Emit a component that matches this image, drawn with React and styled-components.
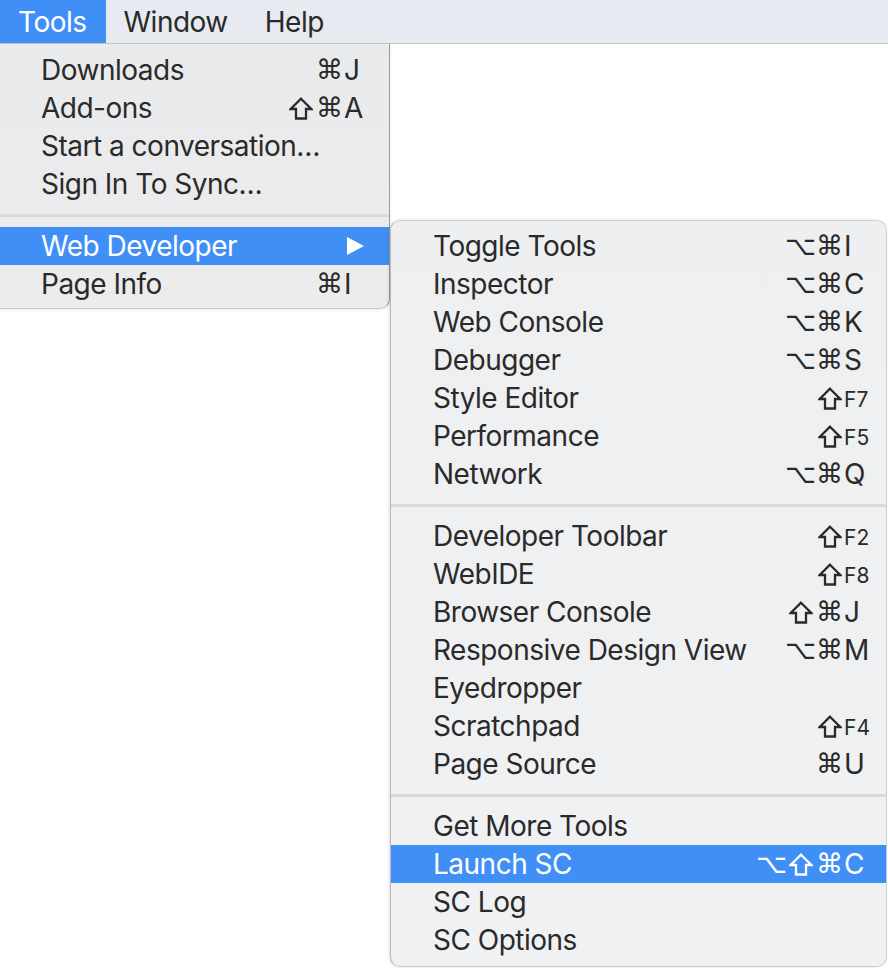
import React from "react";
import styled, { createGlobalStyle } from "styled-components";

const GlobalStyle = createGlobalStyle`
  html, body {
    margin: 0;
    padding: 0;
    background: #ffffff;
  }
  body {
    font-family: Inter, "Noto Sans", "Liberation Sans", sans-serif;
    -webkit-font-smoothing: antialiased;
  }
`;

const HIGHLIGHT = "#3f8ff7";
const TEXT = "#2a2a2a";

const Page = styled.div`
  width: 888px;
  height: 968px;
  overflow: hidden;
  display: flex;
  flex-direction: column;
  background: #ffffff;
`;

const MenuBar = styled.div`
  height: 44px;
  box-sizing: border-box;
  display: flex;
  align-items: stretch;
  background: #e7ebf1;
  border-bottom: 1px solid #c2c4c8;
  flex-shrink: 0;
`;

const BarItem = styled.div`
  display: flex;
  align-items: center;
  padding: 0 19px 0 18px;
  font-size: 28px;
  color: ${(p) => (p.$active ? "#ffffff" : TEXT)};
  background: ${(p) => (p.$active ? HIGHLIGHT : "transparent")};
  letter-spacing: -0.5px;
`;

const MenuArea = styled.div`
  display: flex;
  align-items: flex-start;
`;

const Menu = styled.div`
  width: ${(p) => p.$width}px;
  box-sizing: border-box;
  margin-top: ${(p) => p.$offset || 0}px;
  padding: ${(p) => p.$padTop}px 0 ${(p) => p.$padBottom}px;
  background: ${(p) => p.$bg};
  border-right: 1px solid ${(p) => p.$borderColor};
  border-left: ${(p) => (p.$sub ? "1px solid #b9babd" : "none")};
  border-top: ${(p) => (p.$sub ? "1px solid #cfd0d3" : "none")};
  border-bottom: 1px solid #c9cacd;
  border-radius: ${(p) => (p.$sub ? "10px" : "0 0 10px 0")};
  box-shadow: ${(p) =>
    p.$sub ? "-1px 0 3px rgba(0,0,0,0.12)" : "0 1px 3px rgba(0,0,0,0.1)"};
  overflow: hidden;
  flex-shrink: 0;
`;

const Row = styled.div`
  height: 38px;
  display: flex;
  align-items: center;
  padding: 0 ${(p) => p.$padRight}px 0 ${(p) => p.$padLeft}px;
  background: ${(p) => (p.$active ? HIGHLIGHT : "transparent")};
  color: ${(p) => (p.$active ? "#ffffff" : TEXT)};
`;

const Label = styled.span`
  flex: 1;
  font-size: 28px;
  line-height: 38px;
  white-space: nowrap;
  letter-spacing: -0.5px;
`;

const Mods = styled.span`
  display: flex;
  justify-content: flex-end;
  align-items: center;
`;

const Mod = styled.span`
  display: inline-flex;
  justify-content: center;
  align-items: center;
  width: 29px;
  height: 38px;
  font-family: "DejaVu Sans", sans-serif;
  font-size: 27px;
  line-height: 38px;
`;

const ShiftIcon = styled.svg`
  width: 24px;
  height: 23px;
  display: block;
  margin-top: 1px;
`;

const Key = styled.span`
  display: inline-block;
  width: 24px;
  text-align: left;
  font-size: ${(p) => (p.$small ? "21px" : "28px")};
  line-height: 38px;
  padding-top: ${(p) => (p.$small ? "3px" : "0")};
`;

const Arrow = styled.svg`
  width: 24px;
  height: 18px;
  display: block;
`;

const Separator = styled.div`
  height: 24px;
  display: flex;
  align-items: center;
  &::after {
    content: "";
    flex: 1;
    height: 3px;
    background: #d9d9db;
  }
`;

const toolsMenu = [
  { label: "Downloads", mods: "⌘", key: "J" },
  { label: "Add-ons", mods: "⇧⌘", key: "A" },
  { label: "Start a conversation…" },
  { label: "Sign In To Sync…" },
  { sep: true },
  { label: "Web Developer", submenu: true, active: true },
  { label: "Page Info", mods: "⌘", key: "I" },
];

const devMenu = [
  { label: "Toggle Tools", mods: "⌥⌘", key: "I" },
  { label: "Inspector", mods: "⌥⌘", key: "C" },
  { label: "Web Console", mods: "⌥⌘", key: "K" },
  { label: "Debugger", mods: "⌥⌘", key: "S" },
  { label: "Style Editor", mods: "⇧", key: "F7", small: true },
  { label: "Performance", mods: "⇧", key: "F5", small: true },
  { label: "Network", mods: "⌥⌘", key: "Q" },
  { sep: true },
  { label: "Developer Toolbar", mods: "⇧", key: "F2", small: true },
  { label: "WebIDE", mods: "⇧", key: "F8", small: true },
  { label: "Browser Console", mods: "⇧⌘", key: "J" },
  { label: "Responsive Design View", mods: "⌥⌘", key: "M" },
  { label: "Eyedropper" },
  { label: "Scratchpad", mods: "⇧", key: "F4", small: true },
  { label: "Page Source", mods: "⌘", key: "U" },
  { sep: true },
  { label: "Get More Tools" },
  { label: "Launch SC", mods: "⌥⇧⌘", key: "C", active: true },
  { label: "SC Log" },
  { label: "SC Options" },
];

function ModGlyph({ m }) {
  if (m === "⇧") {
    return (
      <Mod>
        <ShiftIcon viewBox="0 0 24 23" aria-label="⇧">
          <path
            d="M12 1.7 L22.3 12 L17 12 L17 21.5 L7 21.5 L7 12 L1.7 12 Z"
            fill="none"
            stroke="currentColor"
            strokeWidth="2.3"
            strokeLinejoin="miter"
          />
        </ShiftIcon>
      </Mod>
    );
  }
  return <Mod>{m}</Mod>;
}

function MenuItems({ items, padLeft, padRight }) {
  return items.map((it, i) => {
    if (it.sep) return <Separator key={i} />;
    return (
      <Row key={i} $active={it.active} $padLeft={padLeft} $padRight={padRight}>
        <Label>{it.label}</Label>
        {it.mods && (
          <Mods>
            {Array.from(it.mods).map((m, j) => (
              <ModGlyph key={j} m={m} />
            ))}
          </Mods>
        )}
        {it.key && <Key $small={it.small}>{it.key}</Key>}
        {it.submenu && (
          <Arrow viewBox="0 0 24 18">
            <polygon points="3,0 20,9 3,18" fill="#ffffff" />
          </Arrow>
        )}
      </Row>
    );
  });
}

export default function App() {
  return (
    <>
      <GlobalStyle />
      <Page>
        <MenuBar>
          <BarItem $active>Tools</BarItem>
          <BarItem>Window</BarItem>
          <BarItem>Help</BarItem>
        </MenuBar>
        <MenuArea>
          <Menu
            $width={390}
            $padTop={7}
            $padBottom={5}
            $bg="linear-gradient(180deg, #e9eaec 0%, #ececed 100%)"
            $borderColor="#9a9b9e"
          >
            <MenuItems items={toolsMenu} padLeft={41} padRight={21} />
          </Menu>
          <Menu
            $sub
            $width={497}
            $offset={176}
            $padTop={6}
            $padBottom={7}
            $bg="linear-gradient(180deg, #eeeff1 0%, #f0f1f3 100%)"
            $borderColor="#cfd0d3"
          >
            <MenuItems items={devMenu} padLeft={42} padRight={18} />
          </Menu>
        </MenuArea>
      </Page>
    </>
  );
}
